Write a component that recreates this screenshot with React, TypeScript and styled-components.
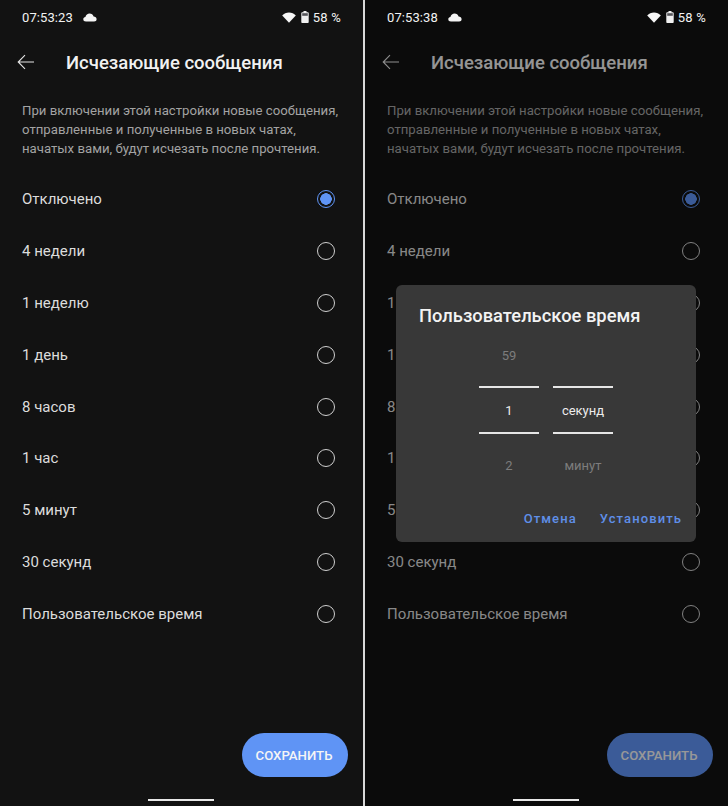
import styled, { createGlobalStyle } from "styled-components";

const OPTIONS = [
  "Отключено",
  "4 недели",
  "1 неделю",
  "1 день",
  "8 часов",
  "1 час",
  "5 минут",
  "30 секунд",
  "Пользовательское время",
];

export default function App() {
  return (
    <>
      <GlobalStyle />
      <Page>
        <SettingsScreen time="07:53:23" />
        <Divider />
        <SettingsScreen time="07:53:38" dimmed>
          <TimeDialog />
        </SettingsScreen>
      </Page>
    </>
  );
}

interface SettingsScreenProps {
  time: string;
  dimmed?: boolean;
  children?: React.ReactNode;
}

function SettingsScreen({ time, dimmed, children }: SettingsScreenProps) {
  return (
    <Screen>
      <StatusBar>
        <Clock>{time}</Clock>
        <CloudIcon />
        <StatusRight>
          <WifiIcon />
          <BatteryIcon />
          <Percent>58 %</Percent>
        </StatusRight>
      </StatusBar>

      <Header>
        <BackIcon />
        <Title>Исчезающие сообщения</Title>
      </Header>

      <Description>
        При включении этой настройки новые сообщения,
        <br />
        отправленные и полученные в новых чатах,
        <br />
        начатых вами, будут исчезать после прочтения.
      </Description>

      <OptionList>
        {OPTIONS.map((label, i) => (
          <Option key={label}>
            <span>{label}</span>
            <Radio $checked={i === 0} />
          </Option>
        ))}
      </OptionList>

      <SaveButton>СОХРАНИТЬ</SaveButton>

      {dimmed && <Scrim />}
      {children}
      <HomeBar />
    </Screen>
  );
}

function TimeDialog() {
  return (
    <Dialog>
      <DialogTitle>Пользовательское время</DialogTitle>
      <Pickers>
        <Picker>
          <PickerFaded>59</PickerFaded>
          <PickerValue>1</PickerValue>
          <PickerFaded>2</PickerFaded>
        </Picker>
        <Picker>
          <PickerFaded />
          <PickerValue>секунд</PickerValue>
          <PickerFaded>минут</PickerFaded>
        </Picker>
      </Pickers>
      <DialogActions>
        <DialogAction>Отмена</DialogAction>
        <DialogAction>Установить</DialogAction>
      </DialogActions>
    </Dialog>
  );
}

function CloudIcon() {
  return (
    <CloudSvg width="14" height="9" viewBox="0 0 14 9">
      <path
        d="M3 8.5C1.300 8.500.3 7.500.3 6.200c0-1.200.9-2.100 2.100-2.200C2.900 1.900 4.600.5 6.600.5c1.900 0 3.500 1.200 4 3 1.600.1 3 1.100 3 2.700 0 1.300-1 2.300-2.500 2.300H3Z"
        fill="#f4f4f4"
      />
    </CloudSvg>
  );
}

function WifiIcon() {
  return (
    <StatusSvg width="14" height="11" viewBox="0 0 14 11">
      <path d="M7 10.800.2 3.400C1.900 1.700 4.300.6 7 .6s5.100 1.100 6.800 2.800L7 10.800Z" fill="#f7f7f7" />
    </StatusSvg>
  );
}

function BatteryIcon() {
  return (
    <BatterySvg width="8" height="12" viewBox="0 0 8 12">
      <path d="M2.500 0h3v1.200h1.300c.5 0 .9.4.9.9V11c0 .5-.4 1-.9 1H1.200c-.5 0-.9-.5-.9-1V2.100c0-.5.4-.9.9-.9h1.300V0Z" fill="#f0f0f0" />
      <rect x="1.200" y="2.200" width="5.600" height="2.600" fill="#55555a" />
    </BatterySvg>
  );
}

function BackIcon() {
  return (
    <BackSvg width="18" height="16" viewBox="0 0 18 16" fill="none">
      <path d="M17 8H1.500M8 1.200 1.200 8 8 14.800" stroke="#e6e6e6" strokeWidth="1.100" />
    </BackSvg>
  );
}

const GlobalStyle = createGlobalStyle`
  html, body {
    margin: 0;
    padding: 0;
    background: #0b0b0b;
  }
  body {
    font-family: Roboto, "Noto Sans", sans-serif;
    -webkit-font-smoothing: antialiased;
  }
`;

const Page = styled.div`
  display: flex;
  width: 728px;
  height: 806px;
  overflow: hidden;
`;

const Divider = styled.div`
  width: 2px;
  flex: none;
  background: #d8d8d8;
`;

const Screen = styled.div`
  position: relative;
  flex: 1;
  display: flex;
  flex-direction: column;
  padding: 0 28.500px 0 22px;
  background: #121212;
  box-sizing: border-box;
  overflow: hidden;
`;

const StatusBar = styled.div`
  position: relative;
  z-index: 2;
  display: flex;
  align-items: center;
  height: 18px;
  margin-top: 8px;
  color: #f2f2f2;
  font-size: 13px;
`;

const Clock = styled.span`
  letter-spacing: 0.1px;
`;

const StatusRight = styled.div`
  display: flex;
  align-items: center;
  margin-left: auto;
  margin-right: -6.500px;
`;

const StatusSvg = styled.svg`
  display: block;
  flex: none;
`;

const CloudSvg = styled(StatusSvg)`
  margin-left: 10px;
`;

const BatterySvg = styled(StatusSvg)`
  margin-left: 5px;
`;

const Percent = styled.span`
  margin-left: 4px;
  letter-spacing: 0.2px;
`;

const Header = styled.div`
  display: flex;
  align-items: center;
  height: 30px;
  margin-top: 22px;
`;

const BackSvg = styled.svg`
  display: block;
  margin-left: -5px;
  margin-right: 31px;
  margin-top: -3px;
`;

const Title = styled.h1`
  margin: 0;
  color: #f1f1f1;
  font-size: 18.500px;
  font-weight: 500;
  line-height: 24px;
  white-space: nowrap;
`;

const Description = styled.p`
  margin: 23px -10px 0 0;
  color: #a3a3a3;
  font-size: 13.200px;
  line-height: 19px;
  white-space: nowrap;
`;

const OptionList = styled.div`
  display: flex;
  flex-direction: column;
  margin-top: 15.500px;
`;

const Option = styled.div`
  display: flex;
  align-items: center;
  justify-content: space-between;
  height: 51.800px;
  color: #dcdcdc;
  font-size: 15px;
`;

const Radio = styled.div<{ $checked?: boolean }>`
  width: 18px;
  height: 18px;
  box-sizing: border-box;
  border-radius: 50%;
  border: 1.700px solid ${(p) => (p.$checked ? "#5f94f5" : "#cfcfcf")};
  background: ${(p) =>
    p.$checked
      ? "radial-gradient(circle, #5f94f5 0 5.500px, transparent 6px)"
      : "transparent"};
`;

const SaveButton = styled.button`
  position: absolute;
  right: 15px;
  bottom: 29px;
  width: 106px;
  height: 44px;
  padding: 0 2px 0 0;
  border: 0;
  border-radius: 22px;
  background: #5f94f5;
  color: #f5f5f5;
  font-family: inherit;
  font-size: 13.200px;
  font-weight: 500;
`;

const Scrim = styled.div`
  position: absolute;
  inset: 0;
  background: rgba(0, 0, 0, 0.38);
`;

const HomeBar = styled.div`
  position: absolute;
  z-index: 2;
  left: 148px;
  bottom: 5px;
  width: 66px;
  height: 2px;
  background: #e8e8e8;
`;

const Dialog = styled.div`
  position: absolute;
  left: 31px;
  top: 285px;
  width: 300px;
  height: 257px;
  box-sizing: border-box;
  display: flex;
  flex-direction: column;
  padding: 20px 14px 16px 23px;
  border-radius: 6px;
  background: #383838;
`;

const DialogTitle = styled.h2`
  margin: 0;
  color: #f3f3f3;
  font-size: 18.350px;
  font-weight: 500;
  line-height: 22px;
  white-space: nowrap;
`;

const Pickers = styled.div`
  display: flex;
  justify-content: center;
  gap: 14px;
  margin-top: -3px;
  margin-left: -9px;
`;

const Picker = styled.div`
  display: flex;
  flex-direction: column;
  width: 60px;
`;

const PickerFaded = styled.div`
  display: flex;
  align-items: center;
  justify-content: center;
  height: 62px;
  color: #7d7d7d;
  font-size: 13px;
`;

const PickerValue = styled(PickerFaded)`
  box-sizing: border-box;
  height: 48px;
  border-top: 2px solid #e6e6e6;
  border-bottom: 2px solid #e6e6e6;
  color: #ececec;
`;

const DialogActions = styled.div`
  display: flex;
  justify-content: flex-end;
  gap: 23px;
  margin-top: auto;
`;

const DialogAction = styled.span`
  color: #5f8fe8;
  font-size: 13px;
  font-weight: 500;
  letter-spacing: 1.100px;
`;
